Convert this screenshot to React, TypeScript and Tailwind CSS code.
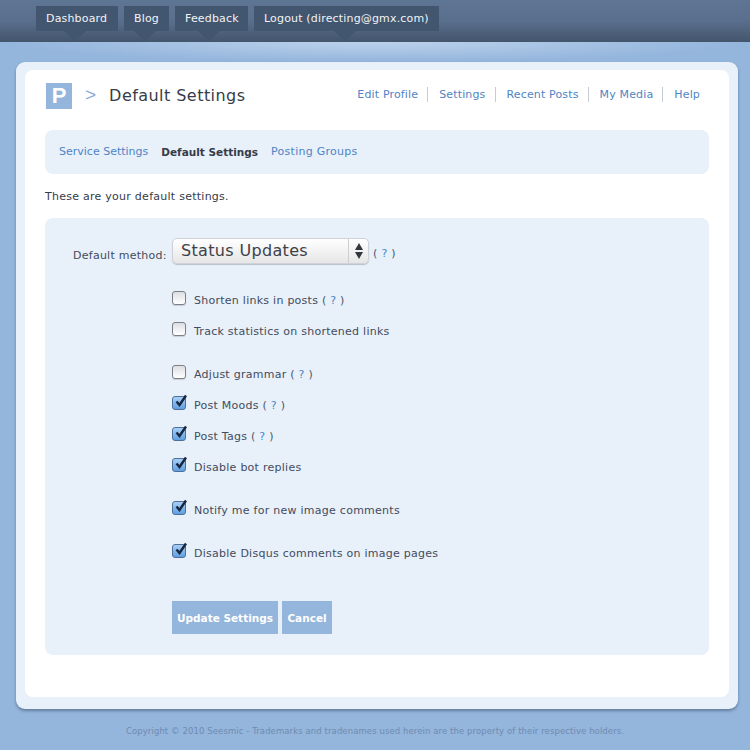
const font = "font-['DejaVu_Sans',sans-serif]";

const navItems = [
  { label: 'Dashboard', width: 'w-[82px]', arrow: 'ml-[28px]' },
  { label: 'Blog', width: 'w-[45px]', arrow: 'ml-[10px]' },
  { label: 'Feedback', width: 'w-[73px]', arrow: 'ml-[23px]' },
  { label: 'Logout (directing@gmx.com)', width: 'w-[185px]', arrow: 'ml-[80px]' },
];

const profileLinks = ['Edit Profile', 'Settings', 'Recent Posts', 'My Media', 'Help'];

const Help = () => (
  <span className="text-[#4a5568]">
    ( <span className="text-[#4a86c8]">?</span> )
  </span>
);

const CheckIcon = () => (
  <svg className="absolute left-0 top-[-3px] w-[16px] h-[16px]" viewBox="0 0 16 16">
    <path d="M3.5 7.5 L6.5 11 L13 1.5" fill="none" stroke="#16263f" strokeWidth="2.4" />
  </svg>
);

function Check({ label, checked, help, className }: { label: string; checked?: boolean; help?: boolean; className: string }) {
  return (
    <div className={`flex items-start h-[20px] ${className}`}>
      <div
        className={`relative w-[14px] h-[14px] rounded-[3px] border shrink-0 ${
          checked
            ? 'border-[#4c6f9c] bg-gradient-to-b from-[#a9d0f5] to-[#5f9fe0]'
            : 'border-[#7d7f85] bg-gradient-to-b from-[#dcdee2] to-[#ffffff] shadow-[0_1px_1px_rgba(0,0,0,0.15)]'
        }`}
      >
        {checked && <CheckIcon />}
      </div>
      <span className="ml-[8px] text-[11px] leading-[20px] tracking-[0.26px] text-[#434c5c]">
        {label}
        {help && (
          <>
            {' '}
            <Help />
          </>
        )}
      </span>
    </div>
  );
}

export default function App() {
  return (
    <div className={`${font} w-[750px] h-[750px] overflow-hidden bg-[#94b5dc]`}>
      {/* top nav */}
      <div className="h-[42px] bg-gradient-to-b from-[#5f7594] via-[#5a6f8d] to-[#43556b] pl-[36px] pt-[6px] flex gap-[6px]">
        {navItems.map((item) => (
          <div key={item.label}>
            <div className={`h-[25px] pl-[10px] bg-[#43566f] text-[11px] leading-[25px] tracking-[0.17px] text-[#f0f3f7] whitespace-nowrap ${item.width}`}>
              {item.label}
            </div>
            <div
              className={`w-0 h-0 border-x-[11px] border-x-transparent border-t-[10px] border-t-[#43566f] ${item.arrow}`}
            />
          </div>
        ))}
      </div>
      <div className="h-[20px] bg-[radial-gradient(ellipse_at_top,#bcd2ec,#94b5dc_70%)]" />

      {/* card */}
      <div className="ml-[16px] w-[722px] h-[647px] rounded-[9px] bg-[#e8f0fa] pt-[8px] px-[9px] shadow-[0_2px_3px_rgba(60,80,110,0.55)]">
        <div className="w-[704px] h-[627px] rounded-[8px] bg-white px-[20px]">
          <div className="h-[60px] flex items-center">
            <div className="w-[26px] h-[26px] ml-[1px] mt-[-9px] bg-[#94b5dc] flex items-center justify-center font-['Liberation_Sans',sans-serif] font-bold text-[22px] leading-none text-white shrink-0">
              P
            </div>
            <span className="ml-[13px] mt-[-9px] text-[19px] text-[#8aa9d2] font-['Liberation_Sans',sans-serif]">&gt;</span>
            <span className="ml-[13px] mt-[-9px] text-[16px] tracking-[0.45px] text-[#363c48]">Default Settings</span>
            <div className="ml-auto mr-[9px] mt-[-11px] flex items-center text-[11px] tracking-[0.15px] text-[#4f84c4]">
              {profileLinks.map((link, i) => (
                <span
                  key={link}
                  className={`leading-[15px] ${i > 0 ? 'pl-[11px]' : ''} ${
                    i < profileLinks.length - 1 ? 'pr-[9px] border-r border-[#c5ccd4]' : ''
                  }`}
                >
                  {link}
                </span>
              ))}
            </div>
          </div>

          {/* sub nav */}
          <div className="h-[44px] pt-[1px] rounded-[8px] bg-[#e8f0fa] px-[14px] flex items-center gap-[13px] text-[11px] text-[#4f84c4]">
            <span>Service Settings</span>
            <span className="font-bold text-[10.5px] text-[#363c48]">Default Settings</span>
            <span className="tracking-[0.26px]">Posting Groups</span>
          </div>

          <p className="mt-[15px] text-[11px] leading-[16px] tracking-[0.26px] text-[#363c48]">
            These are your default settings.
          </p>

          {/* settings panel */}
          <div className="mt-[13px] h-[437px] rounded-[8px] bg-[#e8f0fa] pl-[127px] pt-[20px]">
            <div className="flex items-start h-[26px]">
              <span className="ml-[-99px] mt-[10px] w-[99px] text-[11px] leading-[16px] tracking-[0.26px] text-[#434c5c] whitespace-nowrap">
                Default method:
              </span>
              <div className="w-[197px] h-[26px] rounded-[5px] border border-[#cfd3d9] bg-gradient-to-b from-[#ffffff] to-[#e6e6e6] flex shadow-[0_1px_1px_rgba(0,0,0,0.2)]">
                <span className="flex-1 pl-[8px] text-[16px] leading-[24px] tracking-[0.33px] text-[#3d4148]">Status Updates</span>
                <div className="w-[20px] border-l border-[#cfcfcf] flex flex-col items-center justify-center gap-[2px]">
                  <div className="w-0 h-0 border-x-[4px] border-x-transparent border-b-[7px] border-b-[#33373d]" />
                  <div className="w-0 h-0 border-x-[4px] border-x-transparent border-t-[7px] border-t-[#33373d]" />
                </div>
              </div>
              <span className="ml-[4px] mt-[8px] text-[11px] leading-[16px] tracking-[0.3px]">
                <Help />
              </span>
            </div>

            <Check label="Shorten links in posts" help className="mt-[27px]" />
            <Check label="Track statistics on shortened links" className="mt-[11px]" />
            <Check label="Adjust grammar" help className="mt-[23px]" />
            <Check label="Post Moods" checked help className="mt-[11px]" />
            <Check label="Post Tags" checked help className="mt-[11px]" />
            <Check label="Disable bot replies" checked className="mt-[11px]" />
            <Check label="Notify me for new image comments" checked className="mt-[23px]" />
            <Check label="Disable Disqus comments on image pages" checked className="mt-[23px]" />

            <div className="mt-[37px] flex gap-[4px] font-bold text-[10.5px] text-white whitespace-nowrap">
              <div className="w-[106px] h-[33px] bg-[#94b5dc] text-center leading-[34px]">Update Settings</div>
              <div className="w-[50px] h-[33px] bg-[#94b5dc] text-center leading-[34px]">Cancel</div>
            </div>
          </div>
        </div>
      </div>

      {/* footer */}
      <div className="mt-[15px] text-center text-[8.5px] leading-[14px] tracking-[0.09px] text-[#6f8bb0]">
        Copyright © 2010 Seesmic - Trademarks and tradenames used herein are the property of their respective holders.
      </div>
    </div>
  );
}
